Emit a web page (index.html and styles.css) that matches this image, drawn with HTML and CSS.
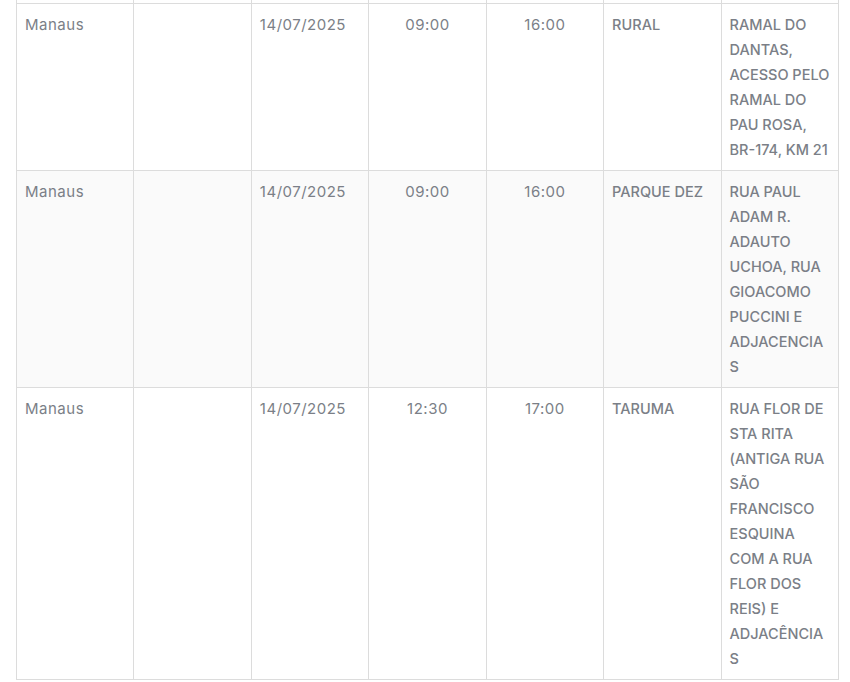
FILE: index.html
```html
<!DOCTYPE html>
<html lang="pt-BR">
<head>
<meta charset="utf-8">
<title>Programação de desligamentos</title>
<link rel="stylesheet" href="styles.css">
</head>
<body>
<div class="wrap">
<table class="schedule">
  <tbody>
    <tr class="cut"><td></td><td></td><td></td><td></td><td></td><td></td><td></td></tr>
    <tr>
      <td>Manaus</td>
      <td></td>
      <td>14/07/2025</td>
      <td class="c">09:00</td>
      <td class="c">16:00</td>
      <td class="up">RURAL</td>
      <td class="up">RAMAL DO DANTAS, ACESSO PELO RAMAL DO PAU ROSA, BR-174, KM 21</td>
    </tr>
    <tr class="alt">
      <td>Manaus</td>
      <td></td>
      <td>14/07/2025</td>
      <td class="c">09:00</td>
      <td class="c">16:00</td>
      <td class="up">PARQUE DEZ</td>
      <td class="up">RUA PAUL ADAM R. ADAUTO UCHOA, RUA GIOACOMO PUCCINI E ADJACENCIAS</td>
    </tr>
    <tr>
      <td>Manaus</td>
      <td></td>
      <td>14/07/2025</td>
      <td class="c">12:30</td>
      <td class="c">17:00</td>
      <td class="up">TARUMA</td>
      <td class="up">RUA FLOR DE STA RITA (ANTIGA RUA SÃO FRANCISCO ESQUINA COM A RUA FLOR DOS REIS) E ADJACÊNCIAS</td>
    </tr>
  </tbody>
</table>
</div>
</body>
</html>
```
FILE: styles.css
```css
html, body {
  margin: 0;
  padding: 0;
  background: #ffffff;
}
.wrap {
  padding: 0 11px 0 16px;
}
.schedule {
  width: 823px;
  border-collapse: collapse;
  table-layout: fixed;
  font-family: "Inter", "Open Sans", sans-serif;
  font-size: 15px;
  line-height: 25px;
  letter-spacing: 0.5px;
  color: #7b7f87;
}
.schedule td {
  border: 1px solid #dcdcdc;
  padding: 8px;
  vertical-align: top;
  text-align: left;
  overflow-wrap: break-word;
  word-break: break-word;
}
.schedule tr.cut td {
  border-top: none;
  padding: 0;
  height: 3px;
  line-height: 3px;
}
.schedule tr.alt td {
  background: #fafafa;
}
.schedule td.c {
  text-align: center;
}
.schedule td.up {
  font-size: 14.5px;
  font-weight: 500;
  letter-spacing: 0;
}
```
